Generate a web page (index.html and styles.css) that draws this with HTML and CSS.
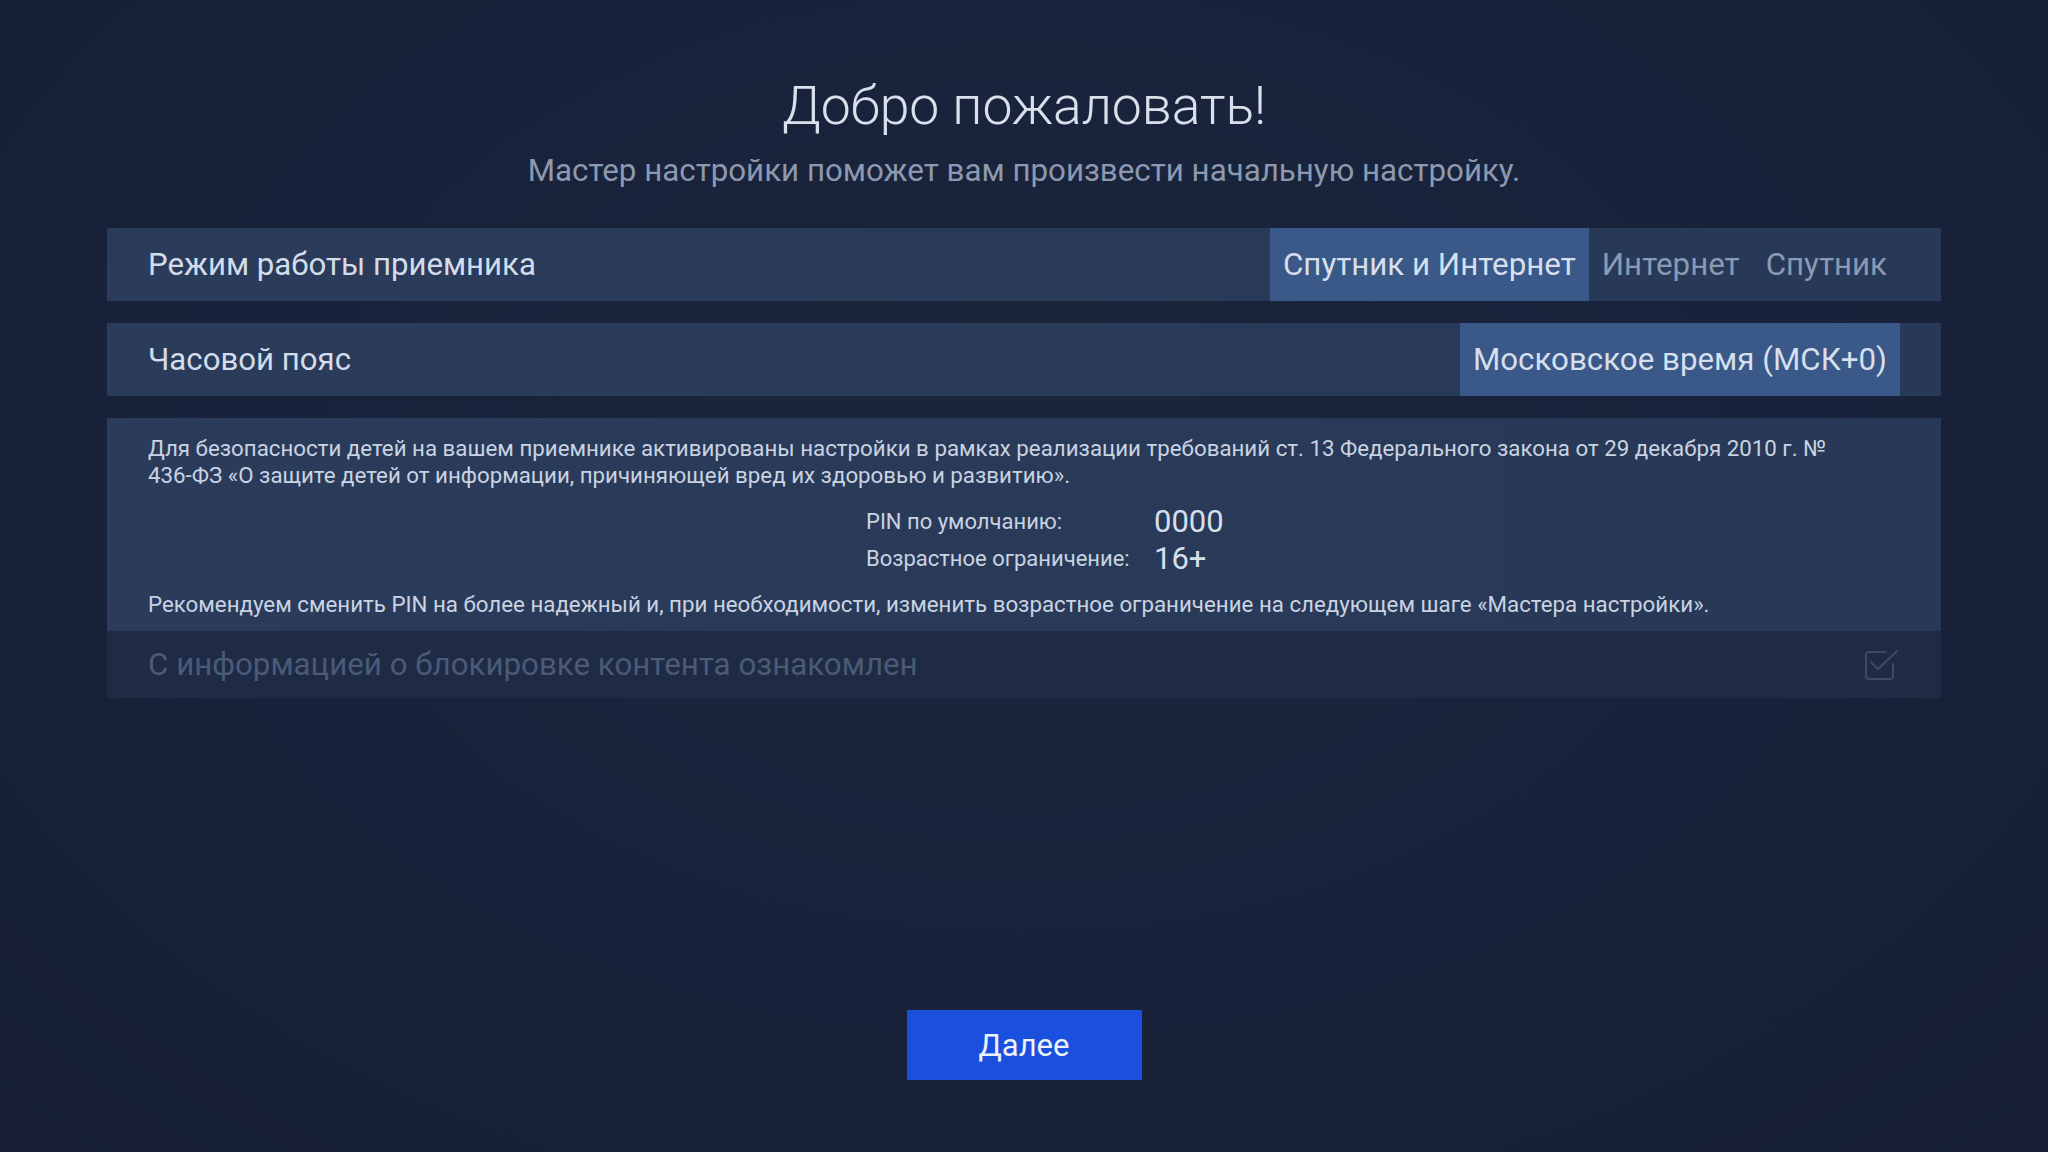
FILE: index.html
```html
<!DOCTYPE html>
<html lang="ru">
<head>
    <meta charset="UTF-8">
    <title>Мастер настройки</title>
    <link rel="stylesheet" href="styles.css">
</head>
<body>
    <main class="wizard">
        <header class="wizard-head">
            <h1 class="title">Добро пожаловать!</h1>
            <p class="subtitle">Мастер настройки поможет вам произвести начальную настройку.</p>
        </header>

        <div class="setting-row">
            <span class="setting-label">Режим работы приемника</span>
            <div class="options">
                <span class="option active">Спутник и Интернет</span>
                <span class="option">Интернет</span>
                <span class="option">Спутник</span>
            </div>
        </div>

        <div class="setting-row">
            <span class="setting-label">Часовой пояс</span>
            <div class="options">
                <span class="option active">Московское время (МСК+0)</span>
            </div>
        </div>

        <section class="info-box">
            <p class="info-text">Для безопасности детей на вашем приемнике активированы настройки в рамках реализации требований ст. 13 Федерального закона от 29 декабря 2010 г. № <span class="nowrap">436-ФЗ</span> «О защите детей от информации, причиняющей вред их здоровью и развитию».</p>
            <div class="pin-table">
                <span class="pin-label">PIN по умолчанию:</span>
                <span class="pin-value">0000</span>
                <span class="pin-label">Возрастное ограничение:</span>
                <span class="pin-value">16+</span>
            </div>
            <p class="info-text recommend">Рекомендуем сменить PIN на более надежный и, при необходимости, изменить возрастное ограничение на следующем шаге «Мастера настройки».</p>
        </section>

        <div class="confirm-row">
            <span class="confirm-label">С информацией о блокировке контента ознакомлен</span>
            <svg class="check-icon" width="36" height="34" viewBox="0 0 36 34" fill="none">
                <path d="M31 16v12a3 3 0 0 1-3 3H7a3 3 0 0 1-3-3V7a3 3 0 0 1 3-3h17"/>
                <path d="M9 14l7 7L35 3"/>
            </svg>
        </div>

        <div class="footer">
            <button class="next-btn">Далее</button>
        </div>
    </main>
</body>
</html>
```

FILE: styles.css
```css
html, body {
    margin: 0;
    padding: 0;
}

body {
    width: 2048px;
    height: 1152px;
    overflow: hidden;
    background: radial-gradient(ellipse at 50% 40%, #1b263d 0%, #18223a 55%, #151e33 100%);
    font-family: Roboto, "Noto Sans", sans-serif;
    color: #d3dcea;
}

.wizard {
    padding: 75px 107px 0;
    display: flex;
    flex-direction: column;
}

/* Header */
.wizard-head {
    text-align: center;
    margin-bottom: 39px;
}

.title {
    margin: 0 0 16px;
    font-size: 53.5px;
    font-weight: 300;
    line-height: 62px;
    color: #d9e0ec;
}

.subtitle {
    margin: 0;
    font-size: 31.3px;
    font-weight: 400;
    line-height: 36px;
    color: #8c99b0;
}

/* Setting rows */
.setting-row {
    display: flex;
    align-items: stretch;
    justify-content: space-between;
    height: 73px;
    padding: 0 41px;
    margin-bottom: 22px;
    background: linear-gradient(90deg, #2b3c5b 0%, #283957 100%);
}

.setting-label {
    display: flex;
    align-items: center;
    font-size: 31.2px;
    color: #d3dcea;
}

.options {
    display: flex;
    align-items: stretch;
}

.option {
    display: flex;
    align-items: center;
    padding: 0 13px;
    font-size: 31.3px;
    color: #8a99b4;
}

.option.active {
    background: #3a5988;
    color: #d6dfec;
}

/* Info block */
.info-box {
    padding: 17px 41px 13px;
    background: linear-gradient(90deg, #2b3c5b 0%, #283957 100%);
}

.info-text {
    margin: 0;
    font-size: 22.3px;
    line-height: 27px;
    color: #c9d3e2;
}

.nowrap {
    white-space: nowrap;
}

.pin-table {
    display: grid;
    grid-template-columns: 288px auto;
    grid-auto-rows: 37px;
    align-items: center;
    margin: 14px 0 14px 718px;
}

.pin-label {
    font-size: 22px;
    line-height: 37px;
    color: #c9d3e2;
}

.pin-value {
    font-size: 31px;
    line-height: 37px;
    color: #d6dfec;
}

/* Confirmation row */
.confirm-row {
    display: flex;
    align-items: center;
    justify-content: space-between;
    height: 67px;
    padding: 0 43px 0 41px;
    background: #1f2b44;
}

.confirm-label {
    font-size: 31.3px;
    color: #4a5a77;
}

.check-icon {
    stroke: #3a4a67;
    stroke-width: 2;
    stroke-linecap: round;
    stroke-linejoin: round;
}

/* Footer */
.footer {
    display: flex;
    justify-content: center;
    margin-top: 312px;
}

.next-btn {
    width: 235px;
    height: 70px;
    border: none;
    background: #1a50dd;
    color: #eef2fc;
    font-family: Roboto, "Noto Sans", sans-serif;
    font-size: 31px;
    font-weight: 400;
    cursor: pointer;
}
```
